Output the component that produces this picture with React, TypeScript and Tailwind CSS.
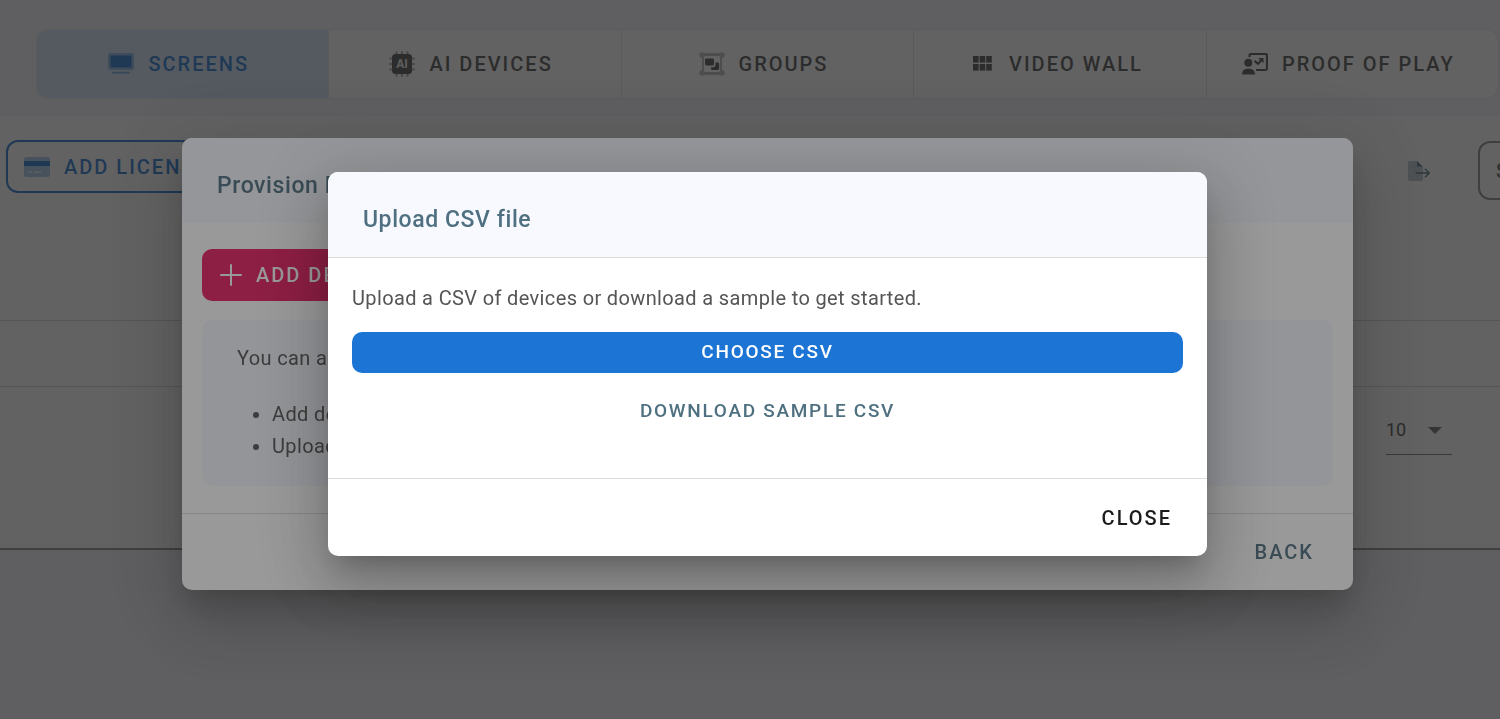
import type { ReactNode } from "react";

function ScreenIcon() {
  return (
    <svg viewBox="0 0 26 22" className="w-[26px] h-[22px]" fill="currentColor" aria-hidden="true">
      <rect x="0" y="0" width="26" height="17" rx="2" opacity="0.4" />
      <rect x="2.5" y="2.5" width="21" height="12" />
      <rect x="4" y="18.8" width="18" height="2" rx="1" opacity="0.5" />
    </svg>
  );
}

function AiChipIcon() {
  return (
    <svg viewBox="0 0 26 26" className="w-[26px] h-[26px] tracking-normal" fill="currentColor" aria-hidden="true">
      <g opacity="0.5">
        {[6.5, 12, 17.5].map((p) => (
          <g key={p}>
            <rect x={p} y="0" width="2" height="26" rx="1" />
            <rect x="0" y={p} width="26" height="2" rx="1" />
          </g>
        ))}
      </g>
      <rect x="3" y="3" width="20" height="20" rx="3.5" />
      <text x="13" y="17.2" textAnchor="middle" fontSize="12" fontWeight="700" fontFamily="Roboto, sans-serif" fill="#eeeeee">
        AI
      </text>
    </svg>
  );
}

function GroupsIcon() {
  return (
    <svg viewBox="0 0 26 24" className="w-[26px] h-6" fill="currentColor" aria-hidden="true">
      <g opacity="0.4">
        <path d="M3 1h20v22H3zM5 4v16h16V4z" fillRule="evenodd" />
        <circle cx="3" cy="3" r="2.8" />
        <circle cx="23" cy="3" r="2.8" />
        <circle cx="3" cy="21" r="2.8" />
        <circle cx="23" cy="21" r="2.8" />
      </g>
      <rect x="6" y="6.5" width="9" height="7" rx="1.4" />
      <path d="M16.5 10.5h2.2c.8 0 1.4.6 1.4 1.4v4.7c0 .8-.6 1.4-1.4 1.4h-5.3c-.8 0-1.4-.6-1.4-1.4v-1.4h2.6c1.100 0 1.900-.8 1.900-1.900z" />
    </svg>
  );
}

function VideoWallIcon() {
  return (
    <svg viewBox="0 0 26 24" className="w-[26px] h-6" fill="currentColor" aria-hidden="true">
      {[4, 10.6, 17.2].map((x) => (
        <g key={x}>
          <rect x={x} y="4" width="5.6" height="6.6" />
          <rect x={x} y="12" width="5.6" height="6.6" />
        </g>
      ))}
    </svg>
  );
}

function ProofIcon() {
  return (
    <svg viewBox="0 0 26 22" className="w-[26px] h-[22px]" fill="none" stroke="currentColor" aria-hidden="true">
      <path d="M7.500 4V2.600c0-.9.700-1.600 1.600-1.600h14.300c.9 0 1.600.7 1.600 1.600v12.800c0 .9-.7 1.600-1.600 1.600H14" strokeWidth="2.200" />
      <path d="M12.500 7.800l3.500 3 4-4.300" strokeWidth="2.200" />
      <path d="M16.200 5h5.300v5.300z" fill="currentColor" stroke="none" />
      <circle cx="6.300" cy="9.800" r="4" fill="currentColor" stroke="none" />
      <path d="M0 21.500c0-3.500 2-5.800 5.200-5.800h2.600c3.200 0 5.200 2.300 5.200 5.800z" fill="currentColor" stroke="none" />
    </svg>
  );
}

function CardIcon() {
  return (
    <svg viewBox="0 0 26 20" className="w-[26px] h-5" fill="currentColor" aria-hidden="true">
      <rect width="26" height="20" rx="2.500" opacity="0.4" />
      <rect y="4" width="26" height="5" />
      <rect x="4" y="14.500" width="4.500" height="1.500" rx="0.700" fill="#ffffff" opacity="0.7" />
      <rect x="10" y="14.500" width="7.500" height="1.500" rx="0.700" fill="#ffffff" opacity="0.7" />
    </svg>
  );
}

function ExportIcon() {
  return (
    <svg viewBox="0 0 22 20" className="w-[22px] h-5" fill="currentColor" aria-hidden="true">
      <path d="M2 0h7v4.200c0 .9.600 1.500 1.500 1.500H15V18c0 1.100-.9 2-2 2H2c-1.100 0-2-.9-2-2V2C0 .9.900 0 2 0z" opacity="0.4" />
      <path d="M9 0l6 5.800H9z" />
      <path d="M8 12h13M17.500 8.300l3.800 3.700-3.800 3.700" fill="none" stroke="currentColor" strokeWidth="1.500" strokeLinecap="round" />
    </svg>
  );
}

const tabs: { label: string; icon: ReactNode }[] = [
  { label: "SCREENS", icon: <ScreenIcon /> },
  { label: "AI DEVICES", icon: <AiChipIcon /> },
  { label: "GROUPS", icon: <GroupsIcon /> },
  { label: "VIDEO WALL", icon: <VideoWallIcon /> },
  { label: "PROOF OF PLAY", icon: <ProofIcon /> },
];

const dialogShadow =
  "shadow-[0_16px_22px_-10px_rgba(0,0,0,0.2),0_35px_56px_4px_rgba(0,0,0,0.14),0_13px_67px_12px_rgba(0,0,0,0.12)]";

export default function App() {
  return (
    <div className="relative min-h-screen overflow-hidden bg-[#f3f3fa] font-[Roboto,sans-serif] text-[20px] text-[#555555]">
      {/* Page behind the dialogs, runs past the right edge */}
      <div className="-mr-[35px]">
        <nav className="px-9 pt-[29px] pb-[17px]">
          <div className="flex h-[70px] overflow-hidden rounded-xl border border-[#e6e6e6] bg-white">
            {tabs.map((tab, i) => (
              <button
                key={tab.label}
                className={`flex flex-1 items-center justify-center gap-[14px] whitespace-nowrap font-medium tracking-widest ${
                  i === 0 ? "bg-[#d3e3f6] text-[#1c74d4]" : "border-l border-[#e6e6e6] text-[#4a4a4a]"
                }`}
              >
                <span className="-ml-2">{tab.icon}</span>
                {tab.label}
              </button>
            ))}
          </div>
        </nav>

        <main className="border-b-2 border-[#8a8a8a] bg-white">
          <div className="flex h-[204px] items-start justify-between pt-6 pl-[6px]">
            <button className="flex h-[53px] items-center gap-[14px] rounded-xl border-2 border-[#1c74d4] px-4 font-medium tracking-widest text-[#1c74d4]">
              <CardIcon />
              ADD LICENSE
            </button>
            <div className="flex items-center gap-12 pt-px">
              <button aria-label="Export" className="text-[#4f7080]">
                <ExportIcon />
              </button>
              <button className="h-[59px] w-[57px] overflow-hidden rounded-xl border-2 border-[#888888] pl-4 text-left font-medium">
                Show
              </button>
            </div>
          </div>
          <div className="h-[67px] border-y border-[#d4d4d4]" />
          <div className="flex h-[161px] justify-end pt-[26px] pr-[83px]">
            <div className="relative h-[42px] w-[66px] border-b border-[#777777]">
              <select aria-label="Rows per page" className="h-8 w-full appearance-none bg-transparent text-[18px] text-[#444444]">
                <option>10</option>
              </select>
              <svg viewBox="0 0 14 7" className="pointer-events-none absolute top-[14px] right-[10px] w-[14px] h-[7px]" fill="#666666" aria-hidden="true">
                <path d="M0 0h14L7 7z" />
              </svg>
            </div>
          </div>
        </main>
      </div>

      {/* Provision dialog */}
      <div className="fixed inset-0 flex items-center justify-center bg-[#212121]/46 pt-[9px] pl-[35px]">
        <section role="dialog" aria-labelledby="provision-title" className={`w-full max-w-[1171px] overflow-hidden rounded-[10px] bg-white ${dialogShadow}`}>
          <header className="bg-[#f8f9ff] px-[35px] pt-8 pb-[21px]">
            <h2 id="provision-title" className="text-[23px] leading-8 font-medium tracking-wide text-[#4f7080]">
              Provision Devices
            </h2>
          </header>
          <div className="px-5 pt-[26px] pb-[27px]">
            <button className="flex h-[52px] items-center gap-[14px] rounded-[10px] bg-[#e91e63] px-[18px] font-medium tracking-widest text-white">
              <svg viewBox="0 0 22 22" className="w-[22px] h-[22px]" stroke="currentColor" strokeWidth="2" strokeLinecap="round" aria-hidden="true">
                <path d="M11 1v20M1 11h20" />
              </svg>
              ADD DEVICE
            </button>
            <div className="mt-[19px] rounded-[10px] bg-[#f6f7ff] px-[35px] pt-[22px] pb-6 leading-8 tracking-[0.018em]">
              <p className="mb-6">You can add devices in two ways:</p>
              <ul className="list-disc pl-[35px]">
                <li>Add devices manually</li>
                <li>Upload a CSV file</li>
              </ul>
            </div>
          </div>
          <footer className="flex h-[77px] items-center justify-end border-t border-[#dddddd] px-[39px]">
            <button className="font-medium tracking-widest text-[#4f7080]">BACK</button>
          </footer>
        </section>
      </div>

      {/* Upload dialog */}
      <div className="fixed inset-0 flex items-center justify-center bg-[#212121]/46 pt-[9px] pl-[35px]">
        <section role="dialog" aria-modal="true" aria-labelledby="upload-title" className={`w-full max-w-[879px] overflow-hidden rounded-[10px] bg-white ${dialogShadow}`}>
          <header className="border-b border-[#dddddd] bg-[#f8f9ff] px-[35px] pt-8 pb-[21px]">
            <h2 id="upload-title" className="text-[23px] leading-8 font-medium tracking-wide text-[#4f7080]">
              Upload CSV file
            </h2>
          </header>
          <div className="flex flex-col px-6 pt-6 pb-[45px]">
            <p className="leading-8 tracking-[0.018em]">Upload a CSV of devices or download a sample to get started.</p>
            <button className="mt-[18px] h-[41px] rounded-[10px] bg-[#1c74d4] text-[19px] font-medium tracking-[0.09em] text-white">
              CHOOSE CSV
            </button>
            <button className="mt-[17px] h-[43px] text-[19px] font-medium tracking-[0.09em] text-[#4f7080]">
              DOWNLOAD SAMPLE CSV
            </button>
          </div>
          <footer className="flex h-[78px] items-center justify-end border-t border-[#dddddd] px-[35px]">
            <button className="font-medium tracking-widest text-[#1b1b1b]">CLOSE</button>
          </footer>
        </section>
      </div>
    </div>
  );
}
